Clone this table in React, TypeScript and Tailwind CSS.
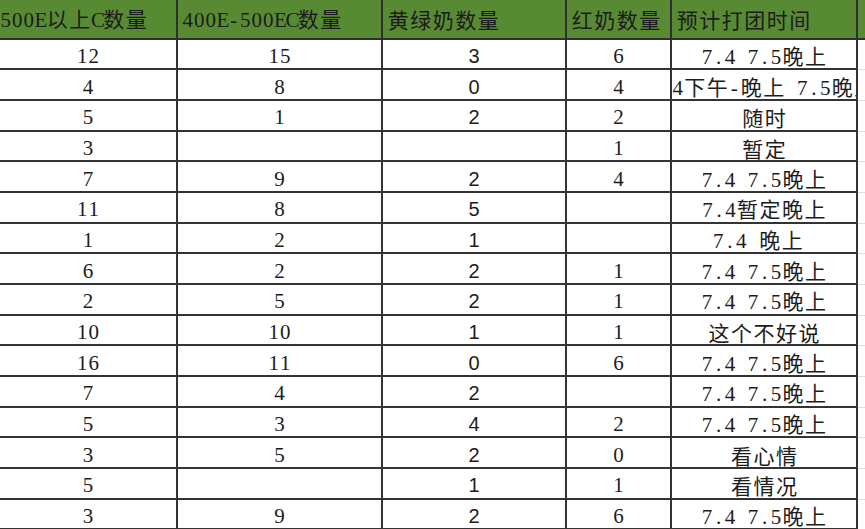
import React from "react";

const rows: (string | number)[][] = [
  [12, 15, 3, 6, "7.4 7.5晚上"],
  [4, 8, 0, 4, "4下午-晚上 7.5晚上"],
  [5, 1, 2, 2, "随时"],
  [3, "", "", 1, "暂定"],
  [7, 9, 2, 4, "7.4 7.5晚上"],
  [11, 8, 5, "", "7.4暂定晚上"],
  [1, 2, 1, "", "7.4 晚上"],
  [6, 2, 2, 1, "7.4 7.5晚上"],
  [2, 5, 2, 1, "7.4 7.5晚上"],
  [10, 10, 1, 1, "这个不好说"],
  [16, 11, 0, 6, "7.4 7.5晚上"],
  [7, 4, 2, "", "7.4 7.5晚上"],
  [5, 3, 4, 2, "7.4 7.5晚上"],
  [3, 5, 2, 0, "看心情"],
  [5, "", 1, 1, "看情况"],
  [3, 9, 2, 6, "7.4 7.5晚上"],
];

const widths = ["w-[178px]", "w-[205px]", "w-[184px]", "w-[105px]", "w-[186px]"];

function Txt({ s, sans = false }: { s: string; sans?: boolean }) {
  return (
    <span className="inline-flex items-baseline whitespace-nowrap">
      {s.split("").map((c, i) =>
        c.charCodeAt(0) < 128 ? (
          <span
            key={i}
            className={
              sans
                ? "inline-block w-[11.5px] text-center text-[20px] leading-[24px] font-['Liberation_Sans',sans-serif]"
                : "inline-block w-[11.5px] text-center text-[21px] leading-[24px] font-['Liberation_Serif',serif]"
            }
          >
            {c === " " ? "\u00a0" : c}
          </span>
        ) : (
          <span
            key={i}
            className="inline-block w-[22.5px] text-center text-[21px] leading-[24px] font-['Noto_Sans_CJK_SC',sans-serif]"
          >
            {c}
          </span>
        )
      )}
    </span>
  );
}

const headers = ["500E以上C数量", "400E-500EC数量", "黄绿奶数量", "红奶数量", "预计打团时间"];

export default function App() {
  return (
    <div className="w-[865px] h-[529px] overflow-hidden bg-white text-[#1c1c1c]">
      <div className="flex h-[39.5px] bg-[#588a34] border-b-2 border-[#2f2f2f]">
        {headers.map((h, i) => (
          <div
            key={i}
            className={`${widths[i]} shrink-0 h-full border-r-2 border-[#2f2f2f] flex items-center overflow-hidden ${i === 0 ? "pl-0" : "pl-[4px]"}`}
          >
            <Txt s={h} />
          </div>
        ))}
        <div className="flex-1" />
      </div>
      {rows.map((r, ri) => (
        <div key={ri} className="flex h-[30.68px]">
          {r.map((v, ci) => {
            const s = String(v);
            const overflow = ci === 4 && s.startsWith("4下午");
            const shiftLeft = ci === 4 && s === "7.4 晚上";
            return (
              <div
                key={ci}
                className={`${widths[ci]} shrink-0 h-full border-r-2 border-b-2 border-[#333333] flex items-center overflow-hidden pt-[4px] ${
                  overflow ? "justify-start" : "justify-center"
                } ${shiftLeft ? "pr-[12px]" : ""}`}
              >
                {v !== "" && <Txt s={s} sans={ci === 2} />}
              </div>
            );
          })}
          <div className="flex-1 h-full border-b border-[#dedede]" />
        </div>
      ))}
    </div>
  );
}
